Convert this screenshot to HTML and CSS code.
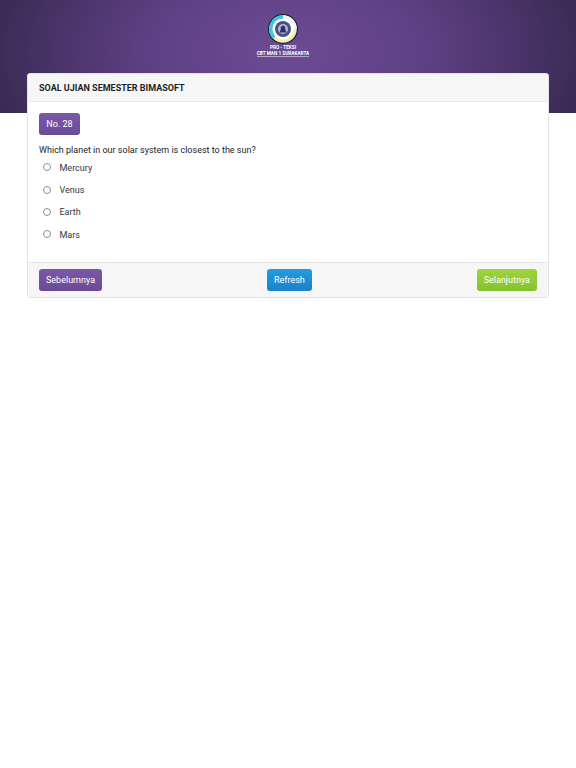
FILE: index.html
```html
<!DOCTYPE html>
<html lang="en">

<head>
    <meta charset="UTF-8">
    <meta name="viewport" content="width=device-width, initial-scale=1.0">
    <title>CBT</title>
    <link rel="stylesheet" href="styles.css">
</head>

<body>
    <div class="top">
        <div class="logo">
            <svg width="30" height="30" viewBox="0 0 30 30">
                <circle cx="15" cy="15" r="15" fill="#1c1f2c"/>
                <circle cx="15" cy="15" r="13.800" fill="#f3f1b0"/>
                <path d="M15 1.200a13.800 13.800 0 0 0-9.800 23.600l3-3A9.600 9.600 0 0 1 15 5.400z" fill="#3cc6e0"/>
                <path d="M15 1.200a13.800 13.800 0 0 1 13.800 13.800h-4.200A9.600 9.600 0 0 0 15 5.400z" fill="#eef6f8"/>
                <circle cx="15" cy="15" r="10.500" fill="#fff"/>
                <circle cx="15" cy="15" r="8" fill="#4a4f86"/>
                <circle cx="15" cy="15" r="5" fill="#b4b9d8"/>
                <path d="M11.500 18.500h7l-1.200-3v-2.500l-2.300-1.800-2.300 1.800v2.500z" fill="#2d3166"/>
            </svg>
            <div class="logo-text logo-title">PRO - TEKSI</div>
            <div class="logo-text logo-name">CBT MAN 1 SURAKARTA</div>
        </div>
    </div>
    <div class="card">
        <div class="card-head">SOAL UJIAN SEMESTER BIMASOFT</div>
        <div class="card-body">
            <div class="number">No. 28</div>
            <p class="question">Which planet in our solar system is closest to the sun?</p>
            <label class="option"><input type="radio" name="answer"><span>Mercury</span></label>
            <label class="option"><input type="radio" name="answer"><span>Venus</span></label>
            <label class="option"><input type="radio" name="answer"><span>Earth</span></label>
            <label class="option"><input type="radio" name="answer"><span>Mars</span></label>
        </div>
        <div class="card-foot">
            <button class="btn btn-purple">Sebelumnya</button>
            <button class="btn btn-blue">Refresh</button>
            <button class="btn btn-green">Selanjutnya</button>
        </div>
    </div>
</body>

</html>
```

FILE: styles.css
```css
* {
    box-sizing: border-box;
}
body {
    margin: 0;
    padding: 0;
    background-color: #fff;
    font-family: Roboto, "Liberation Sans", sans-serif;
    font-size: 9px;
    color: #212529;
}
.top {
    height: 113px;
    padding-top: 14px;
    background: radial-gradient(ellipse 300px 170px at 50% 45%, #6d4b94 0%, #5e4185 45%, #3b2a54 100%);
    display: flex;
    justify-content: center;
}
.logo {
    width: 60px;
    display: flex;
    flex-direction: column;
    align-items: center;
    margin-left: -10px;
}
.logo-text {
    font-size: 4.700px;
    line-height: 6px;
    font-weight: 700;
    color: #fff;
    white-space: nowrap;
}
.logo-title {
    margin-top: 1px;
}
.logo-name {
    line-height: 5px;
    border-bottom: 1px solid rgba(255, 255, 255, 0.5);
}
.card {
    width: 522px;
    margin: -40px 0 0 27px;
    position: relative;
    background-color: #fff;
    border: 1px solid #e3e3e3;
    border-radius: 3px;
}
.card-head {
    height: 28px;
    padding: 0 11px;
    display: flex;
    align-items: center;
    background-color: #f6f6f6;
    border-bottom: 1px solid #e8e8e8;
    font-weight: 700;
    color: #1c1f24;
}
.card-body {
    height: 160px;
    padding: 11px 11px 0;
}
.number {
    width: 41px;
    height: 22px;
    display: flex;
    align-items: center;
    justify-content: center;
    color: #fff;
    border-radius: 3px;
    background: linear-gradient(#7c58a8, #6a4a95);
}
.question {
    margin: 9px 0 0;
    line-height: 12px;
}
.option {
    height: 22.400px;
    padding-left: 4px;
    display: flex;
    align-items: center;
    gap: 8.500px;
    color: #33373c;
}
.option:first-of-type {
    margin-top: 0.500px;
}
.option input {
    appearance: none;
    width: 8px;
    height: 8px;
    margin: -1px 0 0;
    background-color: #fff;
    border: 1px solid #8f8f8f;
    border-radius: 50%;
}
.card-foot {
    height: 35px;
    padding: 0 11px;
    display: flex;
    align-items: center;
    justify-content: space-between;
    background-color: #f6f6f6;
    border-top: 1px solid #e3e3e3;
}
.btn {
    height: 22px;
    padding: 0 7px;
    border: 0;
    border-radius: 3px;
    color: #fff;
    font-family: inherit;
    font-size: 9px;
}
.btn-purple {
    background: linear-gradient(#7c58a8, #6a4a95);
}
.btn-blue {
    background: linear-gradient(#239be0, #1a82c9);
}
.btn-green {
    background: linear-gradient(#9dd43e, #86c22c);
}
```
